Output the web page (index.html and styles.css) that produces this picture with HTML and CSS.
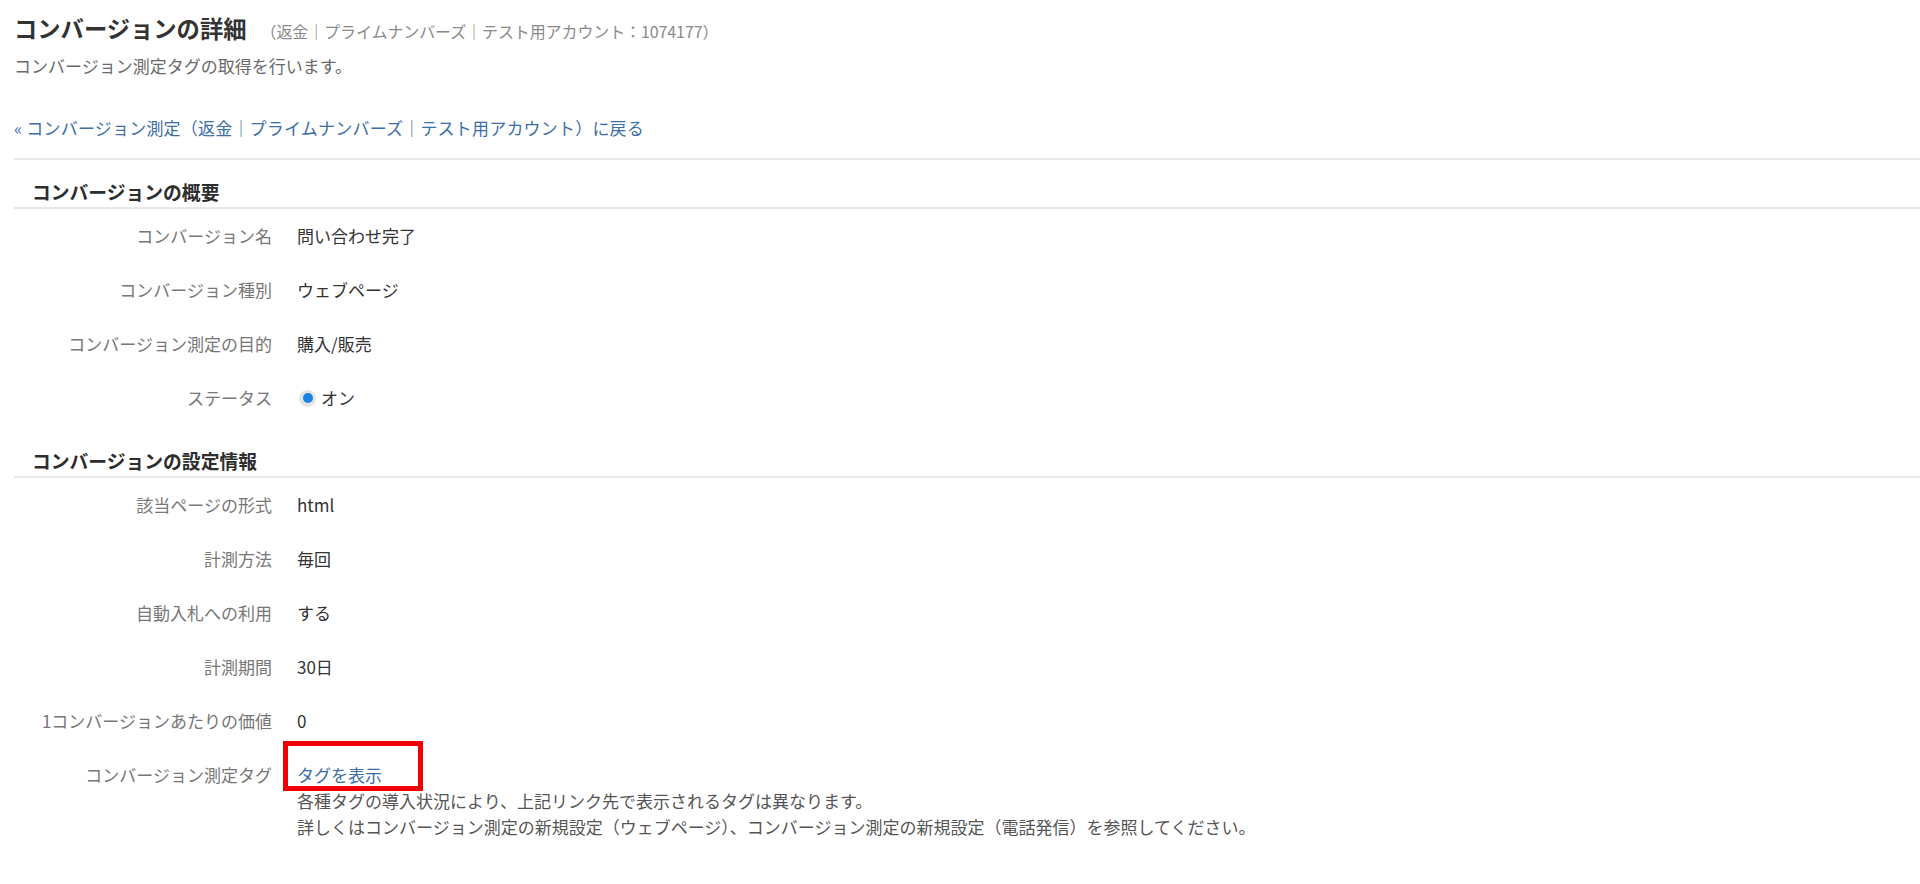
FILE: index.html
```html
<!DOCTYPE html>
<html lang="ja">
<head>
<meta charset="utf-8">
<title>コンバージョンの詳細</title>
<link rel="stylesheet" href="styles.css">
</head>
<body>
<div class="page">
  <header class="page-head">
    <h1 class="title">コンバージョンの詳細<span class="title-sub">（返金｜プライムナンバーズ｜テスト用アカウント：1074177）</span></h1>
    <p class="desc">コンバージョン測定タグの取得を行います。</p>
    <p class="back"><a href="#">«&nbsp;コンバージョン測定（返金｜プライムナンバーズ｜テスト用アカウント）に戻る</a></p>
  </header>

  <section class="section">
    <h2 class="section-title">コンバージョンの概要</h2>
    <div class="rows">
      <div class="row"><div class="label">コンバージョン名</div><div class="value">問い合わせ完了</div></div>
      <div class="row"><div class="label">コンバージョン種別</div><div class="value">ウェブページ</div></div>
      <div class="row"><div class="label">コンバージョン測定の目的</div><div class="value">購入/販売</div></div>
      <div class="row"><div class="label">ステータス</div><div class="value value-inline"><span class="radio"><span class="radio-dot"></span></span>オン</div></div>
    </div>
  </section>

  <section class="section">
    <h2 class="section-title">コンバージョンの設定情報</h2>
    <div class="rows">
      <div class="row"><div class="label">該当ページの形式</div><div class="value">html</div></div>
      <div class="row"><div class="label">計測方法</div><div class="value">毎回</div></div>
      <div class="row"><div class="label">自動入札への利用</div><div class="value">する</div></div>
      <div class="row"><div class="label">計測期間</div><div class="value">30日</div></div>
      <div class="row"><div class="label">1コンバージョンあたりの価値</div><div class="value">0</div></div>
      <div class="row"><div class="label">コンバージョン測定タグ</div>
        <div class="value">
          <span class="tag-link-wrap"><a href="#" class="tag-link">タグを表示</a><span class="highlight"></span></span>
          <div class="note">各種タグの導入状況により、上記リンク先で表示されるタグは異なります。</div>
          <div class="note">詳しくはコンバージョン測定の新規設定（ウェブページ）、コンバージョン測定の新規設定（電話発信）を参照してください。</div>
        </div>
      </div>
    </div>
  </section>
</div>
</body>
</html>
```

FILE: styles.css
```css
html, body {
  margin: 0;
  padding: 0;
  background: #ffffff;
}

body {
  font-family: "Noto Sans CJK JP", "Noto Sans", sans-serif;
  font-size: 17px;
  color: #333333;
}

.page {
  padding: 13px 0 40px 14px;
}

.page-head {
  display: flex;
  flex-direction: column;
}

.title {
  margin: 0;
  font-size: 23.3px;
  line-height: 30px;
  font-weight: bold;
  color: #333333;
}

.title-sub {
  font-size: 16px;
  font-weight: normal;
  color: #8a8a8a;
  margin-left: 14px;
  letter-spacing: -0.1px;
}

.desc {
  margin: 7px 0 0;
  line-height: 26px;
  color: #6a6a6a;
}

.back {
  margin: 36px 0 0;
  line-height: 26px;
}

.back a {
  color: #3d6ea6;
  text-decoration: none;
  letter-spacing: 0.2px;
}

.section {
  border-top: 2px solid #e8e8e8;
  margin-top: 17px;
}

.section + .section {
  border-top: none;
  margin-top: 0;
}

.section-title {
  margin: 0;
  padding: 20px 0 3px 18px;
  font-size: 18.8px;
  line-height: 24px;
  font-weight: bold;
  color: #2e2e2e;
  border-bottom: 2px solid #e8e8e8;
}

.section + .section .section-title {
  padding-top: 24px;
}

.rows {
  display: flex;
  flex-direction: column;
}

.row {
  display: grid;
  grid-template-columns: 258px 1fr;
  column-gap: 25px;
  padding: 14px 0;
  line-height: 26px;
}

.label {
  text-align: right;
  color: #777777;
}

.value {
  color: #333333;
  display: flex;
  flex-direction: column;
  align-items: flex-start;
}

.value-inline {
  flex-direction: row;
  align-items: center;
}

.radio {
  width: 17px;
  height: 17px;
  border-radius: 50%;
  background: #e4e4e4;
  display: inline-flex;
  align-items: center;
  justify-content: center;
  margin: 0 5px 0 2px;
}

.radio-dot {
  width: 10px;
  height: 10px;
  border-radius: 50%;
  background: #1a82e0;
}

.tag-link-wrap {
  position: relative;
  display: inline-block;
}

.tag-link {
  color: #3d6ea6;
  text-decoration: none;
}

.highlight {
  position: absolute;
  left: -14px;
  top: -21px;
  width: 130px;
  height: 40px;
  border: 5px solid #f00000;
  pointer-events: none;
}

.note {
  color: #555555;
}
```
